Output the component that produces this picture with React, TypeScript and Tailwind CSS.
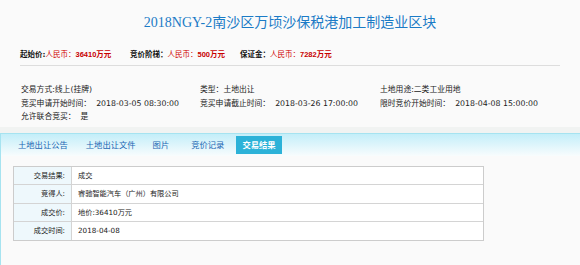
import React from "react";

const info = [
  ["交易方式:线上(挂牌)", "类型：土地出让", "土地用途:二类工业用地"],
  ["竞买申请开始时间：  2018-03-05 08:30:00", "竞买申请截止时间：  2018-03-26 17:00:00", "限时竞价开始时间：  2018-04-08 15:00:00"],
  ["允许联合竞买：  是", "", ""],
];

const tabs = [
  { name: "土地出让公告", cls: "ml-[17px]" },
  { name: "土地出让文件", cls: "ml-[18px]" },
  { name: "图片", cls: "ml-[17px]" },
  { name: "竞价记录", cls: "ml-[22px]" },
];

const rows = [
  ["交易结果:", "成交"],
  ["竞得人:", "睿驰智能汽车（广州）有限公司"],
  ["成交价:", "地价:36410万元"],
  ["成交时间:", "2018-04-08"],
];

function Price({ label, value }: { label: string; value: string }) {
  return (
    <div className="flex items-center">
      <span className="font-bold text-[#111]">{label}</span>
      <span className="text-[#d00000]">人民币：</span>
      <span className="font-bold text-[#c80000] font-['Liberation_Sans','Noto_Sans_CJK_SC',sans-serif]">{value}</span>
    </div>
  );
}

export default function App() {
  return (
    <div className="w-[580px] h-[265px] overflow-hidden bg-[#fafafa] text-[#222] font-['DejaVu_Sans','Noto_Sans_CJK_SC',sans-serif]">
      <div className="h-[127px]">
        <h1 className="pt-[12px] text-center text-[14px] leading-[18px] text-[#1b7bc6]">
          <span className="font-['Liberation_Serif',serif]">2018NGY-2</span>
          <span className="font-['Noto_Sans_CJK_SC',sans-serif]">南沙区万顷沙保税港加工制造业区块</span>
        </h1>
        <div className="mt-[17px] ml-[20px] flex h-[12px] items-center text-[7.5px]">
          <div className="w-[110px]">
            <Price label="起始价:" value="36410万元" />
          </div>
          <div className="w-[110px]">
            <Price label="竞价阶梯：" value="500万元" />
          </div>
          <Price label="保证金：" value="7282万元" />
        </div>
        <div className="mt-[4px] mx-[20px] h-px bg-[#dddddd]" />
        <div className="mt-[17px] pl-[21px] grid grid-cols-[179px_180px_1fr] text-[7.8px] leading-[13.5px] whitespace-pre">
          {info.flat().map((t, i) => (
            <div key={i}>{t}</div>
          ))}
        </div>
      </div>
      <div className="h-[6px] bg-[#f1f3f2]" />
      <div className="h-[132px] border-l border-t border-[#a6e3f0]">
        <div className="h-[22px] pt-[2px] flex items-start bg-gradient-to-b from-[#c3eef9] to-[#f8fcfd] text-[8.3px]">
          {tabs.map((t) => (
            <div key={t.name} className={`${t.cls} h-[18px] leading-[18px] text-[#1a66b3]`}>
              {t.name}
            </div>
          ))}
          <div className="ml-[12px] h-[18px] px-[6px] leading-[18px] bg-[#2cb2d8] text-white font-bold">
            交易结果
          </div>
        </div>
        <div className="mt-[10px] ml-[12px] w-[471px] border border-[#cccccc] text-[7.2px] text-[#222]">
          {rows.map(([k, v], i) => (
            <div key={k} className={`flex h-[18.25px] ${i < rows.length - 1 ? "border-b border-[#d4d4d4]" : ""}`}>
              <div className="w-[58px] bg-[#eef8fc] border-r border-[#d4d4d4] pr-[6px] text-right leading-[17px]">{k}</div>
              <div className="pl-[6px] leading-[17px] bg-white flex-1">{v}</div>
            </div>
          ))}
        </div>
      </div>
    </div>
  );
}
